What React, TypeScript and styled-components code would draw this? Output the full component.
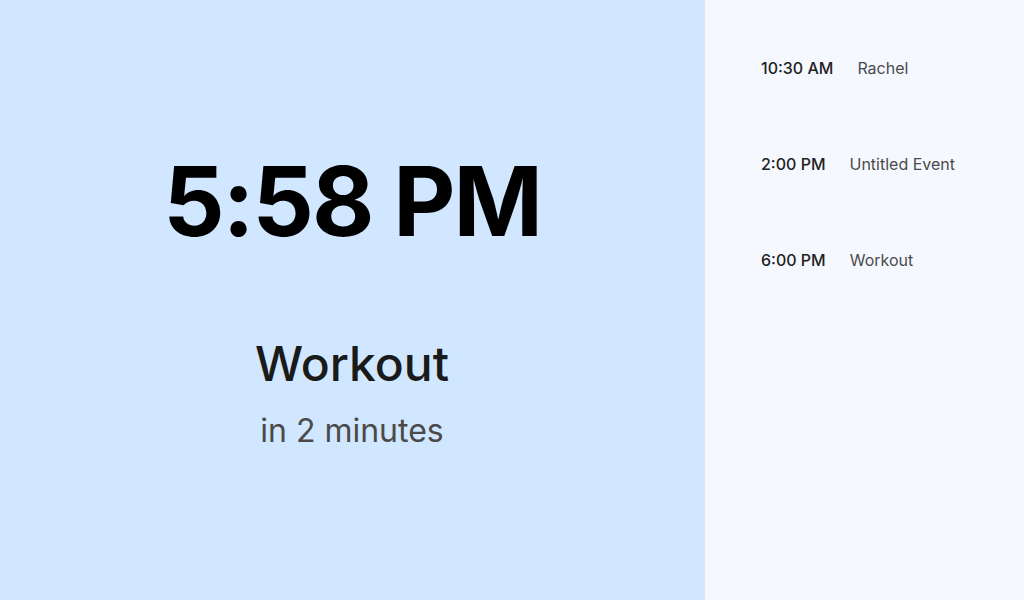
import React from "react";
import styled, { createGlobalStyle } from "styled-components";

const Global = createGlobalStyle`
  html, body { margin: 0; padding: 0; }
  body { font-family: Inter, "Noto Sans", sans-serif; }
  * { box-sizing: border-box; }
`;

const Screen = styled.div`
  display: flex;
  width: 1024px;
  height: 600px;
  overflow: hidden;
`;

const Main = styled.main`
  flex: 0 0 704px;
  background: #d1e6ff;
  display: flex;
  flex-direction: column;
  align-items: center;
  justify-content: center;
`;

const Clock = styled.div`
  font-size: 96px;
  font-weight: 700;
  line-height: 1;
  color: #000;
  letter-spacing: -2px;
`;

const NextTitle = styled.div`
  margin-top: 91px;
  font-size: 48px;
  font-weight: 500;
  line-height: 1;
  color: #1a1a1a;
`;

const NextWhen = styled.div`
  margin-top: 27px;
  font-size: 32px;
  font-weight: 400;
  line-height: 1;
  color: #4a4a4a;
`;

const Sidebar = styled.aside`
  flex: 1;
  background: #f5f9ff;
  border-left: 1px solid #dde4ee;
  padding: 56px 56px;
  display: flex;
  flex-direction: column;
  gap: 72px;
`;

const Row = styled.div`
  display: flex;
  gap: 24px;
  font-size: 16px;
  line-height: 24px;
`;

const Time = styled.span`
  font-weight: 500;
  color: #222;
`;

const Name = styled.span`
  font-weight: 400;
  color: #4a4a4a;
`;

const events = [
  { time: "10:30 AM", name: "Rachel" },
  { time: "2:00 PM", name: "Untitled Event" },
  { time: "6:00 PM", name: "Workout" },
];

export default function App() {
  return (
    <>
      <Global />
      <Screen>
        <Main>
          <Clock>5:58 PM</Clock>
          <NextTitle>Workout</NextTitle>
          <NextWhen>in 2 minutes</NextWhen>
        </Main>
        <Sidebar>
          {events.map((e) => (
            <Row key={e.time}>
              <Time>{e.time}</Time>
              <Name>{e.name}</Name>
            </Row>
          ))}
        </Sidebar>
      </Screen>
    </>
  );
}
